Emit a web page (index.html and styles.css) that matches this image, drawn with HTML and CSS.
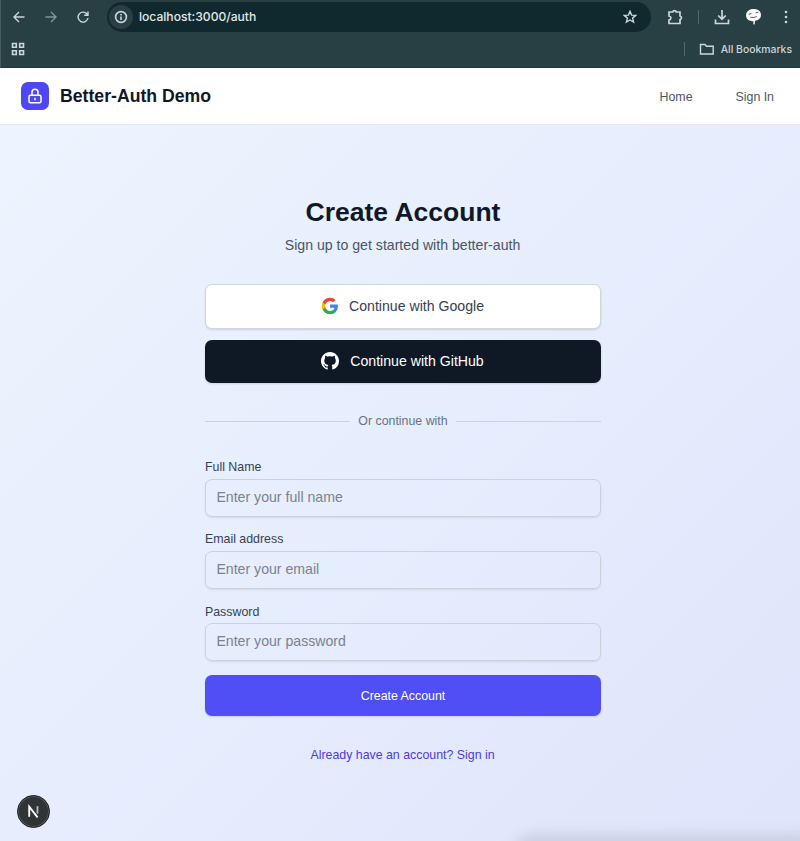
FILE: index.html
```html
<!DOCTYPE html>
<html lang="en">
<head>
<meta charset="utf-8">
<title>Better-Auth Demo</title>
<link rel="stylesheet" href="styles.css">
</head>
<body>
<div class="browser">
  <div class="toolbar">
    <svg class="ic back" viewBox="0 0 14 14"><path d="M12.5 7H2M7 2 2 7l5 5"/></svg>
    <svg class="ic forward" viewBox="0 0 14 14"><path d="M1.5 7H12M7 2l5 5-5 5"/></svg>
    <svg class="ic reload" viewBox="0 0 14 14"><path d="M11.4 4.6A5 5 0 1 0 12 8M12 1.500v3.800H8.200"/></svg>
    <div class="omnibox">
      <span class="info"><svg class="ic" viewBox="0 0 14 14"><circle cx="7" cy="7" r="5.400"/><path d="M7 6.400v3.600M7 4v1.400"/></svg></span>
      <span class="url">localhost:3000/auth</span>
      <svg class="ic star" viewBox="0 0 14 14"><path d="m7 1.300 1.600 3.800 4.100.3-3.100 2.700 1 4L7 10l-3.600 2.100 1-4-3.100-2.700 4.100-.3z"/></svg>
    </div>
    <svg class="ic puzzle" viewBox="0 0 16 16"><path d="M2 3h3.800c.2-1.800 3.200-1.800 3.400 0H13v4c1.900.2 1.900 3.300 0 3.500v4H2V11c2.500-.3 2.500-3.700 0-4z"/></svg>
    <i class="sep"></i>
    <svg class="ic download" viewBox="0 0 16 16"><path d="M8 1v9M4.200 6.500 8 10.200l3.800-3.700M1.500 10.500v4h13v-4"/></svg>
    <svg class="avatar" viewBox="0 0 16 16"><path d="M8 1c4 0 7 2 7 5.500s-2.500 5-5.500 5.500L9 15.500l-1.200-.2.200-2.800C4 12.300 1 10.500 1 7s3-6 7-6z" fill="#fff"/><path d="M3.500 6 6 5.200M10 4.500l2.500-.5M5 8.600c2 .6 4 .4 6-.6" fill="none" stroke="#26383c" stroke-width=".8"/></svg>
    <svg class="dots" viewBox="0 0 4 14"><circle cx="2" cy="2" r="1.300"/><circle cx="2" cy="7" r="1.300"/><circle cx="2" cy="12" r="1.300"/></svg>
  </div>
  <div class="bookmarks">
    <svg class="ic apps" viewBox="0 0 14 14"><path d="M1.500 1.500h3.800v3.800H1.500zM8.700 1.500h3.800v3.800H8.700zM1.500 8.700h3.800v3.800H1.500zM8.700 8.700h3.800v3.800H8.700z"/></svg>
    <i class="sep"></i>
    <svg class="ic folder" viewBox="0 0 16 14"><path d="M1.500 12V2.500h4.500l1.500 1.700h6.700V12z"/></svg>
    <span class="all">All Bookmarks</span>
  </div>
</div>
<header class="nav">
  <span class="logo"><svg viewBox="0 0 24 24"><path d="M12 15v2m-6 4h12a2 2 0 0 0 2-2v-6a2 2 0 0 0-2-2H6a2 2 0 0 0-2 2v6a2 2 0 0 0 2 2zm10-10V7a4 4 0 0 0-8 0v4h8z"/></svg></span>
  <span class="brand">Better-Auth Demo</span>
  <a class="link home">Home</a>
  <a class="link">Sign In</a>
</header>
<main class="page">
  <section class="card">
    <h1>Create Account</h1>
    <p class="sub">Sign up to get started with better-auth</p>
    <button class="oauth google">
      <svg viewBox="0 0 24 24"><path fill="#4285F4" d="M22.560 12.250c0-.78-.07-1.530-.2-2.250H12v4.260h5.920c-.26 1.370-1.040 2.530-2.210 3.310v2.770h3.570c2.080-1.920 3.280-4.740 3.280-8.090z"/><path fill="#34A853" d="M12 23c2.970 0 5.460-.98 7.280-2.660l-3.570-2.770c-.98.66-2.230 1.060-3.710 1.060-2.860 0-5.290-1.930-6.160-4.530H2.180v2.840C3.990 20.530 7.700 23 12 23z"/><path fill="#FBBC05" d="M5.840 14.090c-.22-.66-.35-1.360-.35-2.090s.13-1.430.35-2.090V7.070H2.180C1.430 8.550 1 10.220 1 12s.43 3.450 1.180 4.930l3.660-2.840z"/><path fill="#EA4335" d="M12 5.380c1.620 0 3.060.56 4.210 1.640l3.150-3.150C17.450 2.090 14.970 1 12 1 7.700 1 3.990 3.470 2.180 7.070l3.660 2.840c.87-2.600 3.300-4.530 6.160-4.530z"/></svg>
      <span>Continue with Google</span>
    </button>
    <button class="oauth github">
      <svg viewBox="0 0 16 16"><path fill="#fff" d="M8 0C3.580 0 0 3.580 0 8c0 3.540 2.290 6.530 5.470 7.590.4.070.55-.17.55-.38 0-.19-.01-.82-.01-1.490-2.010.37-2.530-.49-2.690-.94-.09-.23-.48-.94-.82-1.130-.28-.15-.68-.52-.01-.53.63-.01 1.080.58 1.230.82.720 1.210 1.870.87 2.330.66.070-.52.280-.87.510-1.070-1.780-.2-3.640-.89-3.640-3.950 0-.87.310-1.590.820-2.150-.08-.2-.36-1.020.08-2.120 0 0 .67-.21 2.200.82.640-.18 1.320-.27 2-.27s1.360.09 2 .27c1.530-1.040 2.200-.82 2.200-.82.440 1.100.160 1.920.08 2.120.510.56.820 1.270.820 2.150 0 3.070-1.870 3.750-3.650 3.950.29.25.54.73.54 1.480 0 1.070-.01 1.930-.01 2.200 0 .21.150.46.550.38A8.010 8.010 0 0 0 16 8c0-4.420-3.580-8-8-8z"/></svg>
      <span>Continue with GitHub</span>
    </button>
    <div class="or"><span>Or continue with</span></div>
    <form>
      <label for="name">Full Name</label>
      <input id="name" type="text" placeholder="Enter your full name">
      <label for="email">Email address</label>
      <input id="email" type="email" placeholder="Enter your email">
      <label for="pw">Password</label>
      <input id="pw" type="password" placeholder="Enter your password">
      <button class="submit" type="button">Create Account</button>
    </form>
    <a class="switch">Already have an account? Sign in</a>
  </section>
</main>
<div class="next"><svg viewBox="0 0 14 14"><path d="M3 11.800V2.500L10.800 12.500"/><path class="fade" d="M10.700 2v7"/></svg></div>
<div class="glow"></div>
</body>
</html>
```
FILE: styles.css
```css
* { box-sizing: border-box; }
body {
  margin: 0;
  height: 841px;
  overflow: hidden;
  position: relative;
  display: flex;
  flex-direction: column;
  font-family: "Liberation Sans", Arial, sans-serif;
}
svg { display: block; flex: none; }
.browser { height: 68px; flex: none; background: #283f43; border-bottom: 1px solid #20363a; border-left: 1px solid #455b5f; color: #d6dfe0; }
.ic { width: 14px; height: 14px; fill: none; stroke: #ccd7d8; stroke-width: 1.4; }
.toolbar { height: 33px; display: flex; align-items: center; padding-left: 11px; }
.forward { margin-left: 18px; stroke: #82979a; }
.reload { margin-left: 18px; }
.omnibox { width: 544px; height: 30px; margin-left: 17px; border-radius: 15px; background: #10292f; display: flex; align-items: center; padding: 0 14px 0 2px; }
.info { width: 24px; height: 24px; border-radius: 50%; background: #283f43; display: flex; align-items: center; justify-content: center; }
.info .ic { stroke-width: 1.6; }
.url { font: 500 12.1px Inter, sans-serif; margin-left: 6px; flex: 1; color: #e1e9ea; }
.puzzle { width: 16px; height: 16px; margin-left: 16px; stroke-width: 1.7; }
.sep { width: 1px; height: 14px; background: #51676a; }
.toolbar .sep { margin-left: 15px; }
.download { width: 16px; height: 16px; margin-left: 15px; stroke-width: 1.7; }
.avatar { width: 17px; height: 17px; margin-left: 15px; }
.dots { width: 4px; height: 14px; margin-left: 22px; fill: #ccd7d8; }
.bookmarks { height: 32px; display: flex; align-items: center; padding-left: 10px; padding-right: 8px; }
.apps { margin-right: auto; stroke-width: 1.6; }
.folder { width: 16px; margin-left: 14px; }
.all { font: 500 10.4px Inter, sans-serif; margin-left: 6px; color: #ccd7d8; }
.nav { height: 57px; flex: none; background: #fff; border-bottom: 1px solid #e6eaf1; display: flex; align-items: center; padding: 1px 26px 0 21px; }
.logo { width: 28px; height: 28px; margin-bottom: 1px; border-radius: 7px; background: #4f46f5; display: flex; align-items: center; justify-content: center; }
.logo svg { width: 18px; height: 18px; fill: none; stroke: #fff; stroke-width: 2; stroke-linecap: round; stroke-linejoin: round; }
.brand { font-size: 17.66px; font-weight: 700; color: #101828; margin-left: 11px; margin-right: auto; }
.link { font-size: 12.36px; color: #4a5565; }
.home { margin-right: 43px; }
.page { flex: 1; background: linear-gradient(135deg, #ecf4fe, #e6edfd 50%, #dfe5fb); padding: 70px 0 0 205px; }
.card { width: 396px; display: flex; flex-direction: column; }
h1 { margin: 0; font-size: 26.5px; line-height: 34px; color: #101828; text-align: center; }
.sub { margin: 6px 0 0; font-size: 14.13px; line-height: 21px; color: #4a5565; text-align: center; padding-right: 1px; }
button { font-family: inherit; border: 0; padding: 0; }
.oauth { display: flex; align-items: center; justify-content: center; border-radius: 7px; font-size: 14.13px; box-shadow: 0 1px 2px #0f172a22; padding: 0 1px 2px 0; }
.google { height: 45px; margin-top: 28px; background: #fff; border: 1px solid #d1d5dc; color: #364153; }
.github { height: 43px; margin-top: 11px; background: #0f1926; color: #fff; }
.oauth svg { width: 18px; height: 18px; margin-right: 11px; }
.google svg { margin-right: 10px; }
.or { display: flex; align-items: center; gap: 8px; height: 20px; margin-top: 28px; font-size: 12.36px; color: #6a7282; }
.or::before, .or::after { content: ""; flex: 1; height: 1px; background: #cdd3dc; }
form { display: flex; flex-direction: column; padding-top: 27px; }
label { font-size: 12.36px; line-height: 18px; color: #364153; }
input { height: 38px; margin: 2.6px 0 13.8px; border: 1px solid #ccd2dc; border-radius: 7px; background: transparent; box-shadow: 0 1px 2px #0f172a18; padding: 0 10.4px 2px; font: 14.13px "Liberation Sans", Arial, sans-serif; }
input::placeholder { color: #7b8290; opacity: 1; }
.submit { height: 41px; border-radius: 7px; background: #4f4ff5; color: #fff; font-size: 12.36px; box-shadow: 0 1px 2px #0f172a22; }
.switch { margin-top: 30px; font-size: 12.36px; line-height: 18px; color: #4f39e0; text-align: center; padding-right: 1px; }
.next { position: absolute; left: 17px; top: 795px; width: 33px; height: 33px; border-radius: 50%; background: #303436; border: 1px solid #1c2024; box-shadow: inset 0 0 0 1px #565a5d; display: flex; align-items: center; justify-content: center; }
.next svg { width: 15px; height: 15px; fill: none; stroke: #fff; stroke-width: 1.7; }
.next .fade { stroke: #b6b9ba; }
.glow { position: absolute; left: 508px; right: -30px; bottom: -22px; height: 30px; border-radius: 28px 0 0 0; background: #cdd1e6; filter: blur(6px); }
```
